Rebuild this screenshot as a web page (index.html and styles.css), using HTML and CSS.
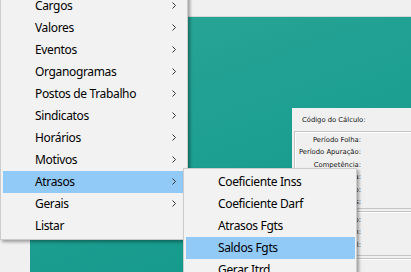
FILE: index.html
```html
<!DOCTYPE html>
<html lang="pt">
<head>
<meta charset="utf-8">
<link rel="stylesheet" href="styles.css">
</head>
<body>
<div class="app">
  <div class="topbar"></div>
  <div class="work">
    <div class="side"></div>
    <div class="desk">
      <div class="form">
        <div class="form-title">Código do Cálculo:</div>
        <div class="group g1">
          <div class="lbl">Período Folha:</div>
          <div class="lbl">Período Apuração:</div>
          <div class="lbl">Competência:</div>
          <div class="lbl">Data:</div>
          <div class="lbl">Tipo:</div>
          <div class="lbl">Status:</div>
        </div>
        <div class="group g2">
          <div class="lbl">Início:</div>
          <div class="lbl">Fim:</div>
          <div class="lbl">Total:</div>
        </div>
        <div class="group g3"></div>
      </div>
    </div>
  </div>
</div>

<div class="menu main-menu">
  <div class="item"><span class="txt">Cargos</span><svg class="chev" width="4" height="7" viewBox="0 0 4 7"><polyline points="0.5,0.5 3.5,3.5 0.5,6.5"/></svg></div>
  <div class="item"><span class="txt">Valores</span><svg class="chev" width="4" height="7" viewBox="0 0 4 7"><polyline points="0.5,0.5 3.5,3.5 0.5,6.5"/></svg></div>
  <div class="item"><span class="txt">Eventos</span><svg class="chev" width="4" height="7" viewBox="0 0 4 7"><polyline points="0.5,0.5 3.5,3.5 0.5,6.5"/></svg></div>
  <div class="item"><span class="txt">Organogramas</span><svg class="chev" width="4" height="7" viewBox="0 0 4 7"><polyline points="0.5,0.5 3.5,3.5 0.5,6.5"/></svg></div>
  <div class="item"><span class="txt">Postos de Trabalho</span><svg class="chev" width="4" height="7" viewBox="0 0 4 7"><polyline points="0.5,0.5 3.5,3.5 0.5,6.5"/></svg></div>
  <div class="item"><span class="txt">Sindicatos</span><svg class="chev" width="4" height="7" viewBox="0 0 4 7"><polyline points="0.5,0.5 3.5,3.5 0.5,6.5"/></svg></div>
  <div class="item"><span class="txt">Horários</span><svg class="chev" width="4" height="7" viewBox="0 0 4 7"><polyline points="0.5,0.5 3.5,3.5 0.5,6.5"/></svg></div>
  <div class="item"><span class="txt">Motivos</span><svg class="chev" width="4" height="7" viewBox="0 0 4 7"><polyline points="0.5,0.5 3.5,3.5 0.5,6.5"/></svg></div>
  <div class="item active"><span class="txt">Atrasos</span><svg class="chev" width="4" height="7" viewBox="0 0 4 7"><polyline points="0.5,0.5 3.5,3.5 0.5,6.5"/></svg></div>
  <div class="item"><span class="txt">Gerais</span><svg class="chev" width="4" height="7" viewBox="0 0 4 7"><polyline points="0.5,0.5 3.5,3.5 0.5,6.5"/></svg></div>
  <div class="item"><span class="txt">Listar</span></div>
</div>

<div class="menu sub-menu">
  <div class="item"><span class="txt">Coeficiente Inss</span></div>
  <div class="item"><span class="txt">Coeficiente Darf</span></div>
  <div class="item"><span class="txt">Atrasos Fgts</span></div>
  <div class="item active"><span class="txt">Saldos Fgts</span></div>
  <div class="item"><span class="txt">Gerar Itrd</span></div>
</div>
</body>
</html>
```
FILE: styles.css
```css
html, body {
  margin: 0;
  padding: 0;
}
body {
  width: 411px;
  height: 272px;
  overflow: hidden;
  position: relative;
  background: #f0f0f0;
  font-family: "Noto Sans", "Open Sans", sans-serif;
}
.app {
  display: flex;
  flex-direction: column;
  height: 272px;
}
.topbar {
  height: 16px;
  background: #f0f0f0;
  border-bottom: 1px solid #d6d6d6;
  flex: none;
}
.work {
  flex: 1;
  display: flex;
}
.side {
  width: 30px;
  background: #f0f0f0;
  flex: none;
}
.desk {
  flex: 1;
  position: relative;
  background: linear-gradient(160deg, #2ba698 0%, #1d9f91 50%, #11978a 100%);
  overflow: hidden;
}
.form {
  position: absolute;
  left: 262px;
  top: 91px;
  width: 160px;
  height: 200px;
  background: #f0f0f0;
  font-family: "DejaVu Sans", sans-serif;
  font-size: 6.8px;
  color: #111;
}
.form-title {
  margin: 8px 0 0 10px;
  height: 8px;
  line-height: 8px;
}
.group {
  margin-left: 2px;
  border: 1px solid #c4c4c4;
  box-shadow: inset 1px 1px 0 #ffffff;
  border-right: none;
}
.g1 {
  margin-top: 7px;
  height: 78px;
  padding-top: 4px;
  box-sizing: border-box;
}
.g2 {
  margin-top: 2px;
  height: 45px;
  padding-top: 4px;
  box-sizing: border-box;
}
.g3 {
  margin-top: 2px;
  height: 40px;
}
.lbl {
  width: 66px;
  text-align: right;
  height: 12.4px;
  line-height: 9px;
}

.menu {
  position: absolute;
  background: #f2f2f2;
  border: 1px solid #cccccc;
  box-shadow: 2px 2px 3px rgba(0, 0, 0, 0.35);
  font-size: 12px;
  letter-spacing: -0.35px;
  color: #000;
}
.main-menu {
  left: 0;
  top: -8px;
  width: 180px;
  padding: 2px 4px 2px 2px;
  z-index: 1;
}
.sub-menu {
  left: 183px;
  top: 168px;
  width: 169px;
  padding: 2px 1px 2px 2px;
  z-index: 2;
}
.item {
  height: 22px;
  box-sizing: border-box;
  display: flex;
  align-items: center;
  padding-left: 32px;
  padding-right: 7px;
  padding-bottom: 1px;
}
.item.active {
  background: #91c9f7;
}
.txt {
  flex: 1;
  white-space: nowrap;
}
.chev {
  flex: none;
  fill: none;
  stroke: #333;
  stroke-width: 1;
}
```
